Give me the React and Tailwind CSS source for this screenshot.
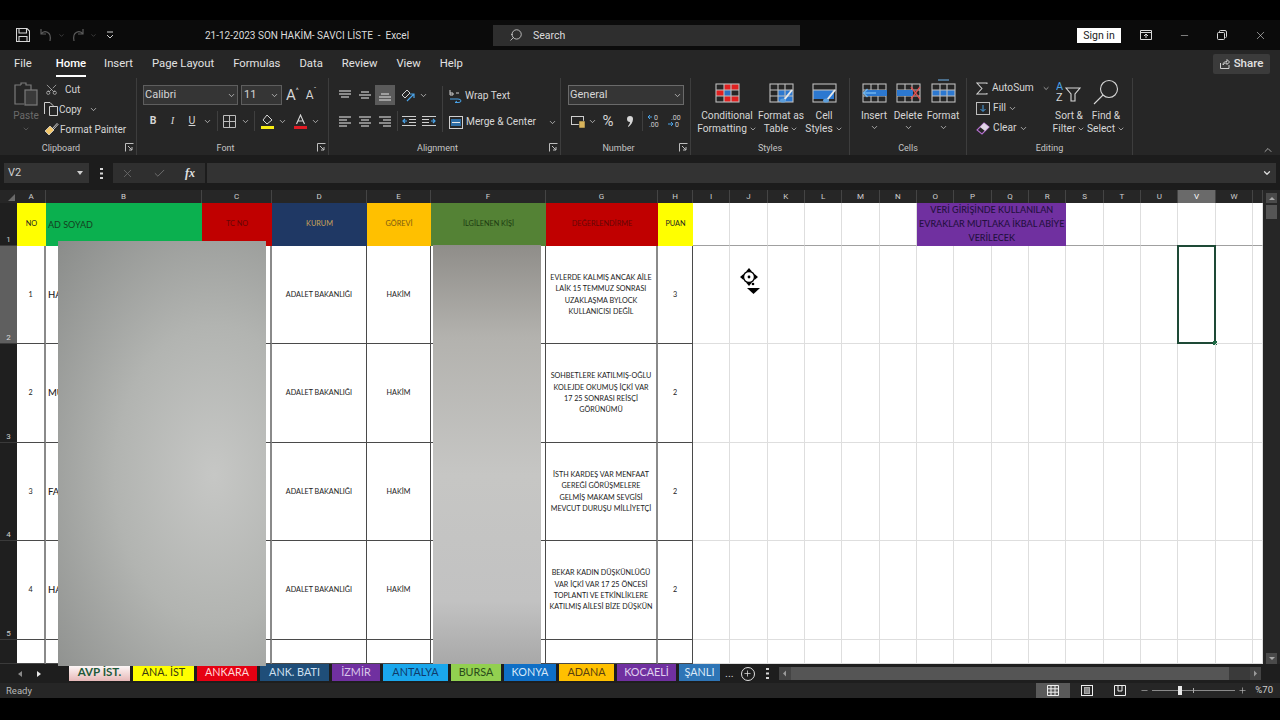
import { ChevronDown, ChevronUp, Check, X, Search, Scissors, Plus, Minus } from "lucide-react";

const ui = "font-['Roboto',sans-serif]";
const cellFont = "font-['Lato',sans-serif]";

const Chev = ({ className = "" }) => (
  <ChevronDown size={9} strokeWidth={2} className={"text-[#cfcfcf] " + className} />
);

const Slot = ({ w, children, className = "" }) => (
  <div className={"flex items-center justify-center shrink-0 h-5 " + w + " " + className}>{children}</div>
);

const Sep = ({ className = "" }) => <div className={"w-px h-5 bg-[#3f3f3f] shrink-0 " + className} />;

// little corner arrow of a ribbon group
const Launcher = () => (
  <svg width="9" height="9" viewBox="0 0 9 9" className="absolute right-[2px] bottom-[3px]" fill="none" stroke="#bdbdbd">
    <path d="M0.5 8.5V0.5H8.5M3 3L7 7M7 4V7H4" />
  </svg>
);

const Group = ({ w, label, launcher, children }) => (
  <div className={"relative flex flex-col shrink-0 h-[77px] border-r border-[#3d3d3d] " + w}>
    <div className="flex-1 flex min-h-0">{children}</div>
    <div className={"h-[13px] text-center text-[9px] leading-[13px] text-[#c4c4c4] " + (launcher ? "pr-[14px]" : "")}>{label}</div>
    {launcher && <Launcher />}
  </div>
);

// lines for the alignment buttons
const Lines = ({ rows }) => (
  <svg width="14" height="12" viewBox="0 0 14 12" stroke="#cfcfcf" strokeWidth="1.2">
    {rows.map(([x1, x2, y], i) => (
      <path key={i} d={`M${x1} ${y}H${x2}`} />
    ))}
  </svg>
);

const Indent = ({ flip }) => (
  <svg width="14" height="12" viewBox="0 0 14 12" fill="none" className={flip ? "-scale-x-100" : ""}>
    <path d="M0 1.5H14M7 4.5H14M7 7.5H14M0 10.5H14" stroke="#cfcfcf" strokeWidth="1.1" />
    <path d="M5 6H1M3 4L1 6L3 8" stroke="#4aa3e8" strokeWidth="1.2" />
  </svg>
);

const SheetIcon = ({ children, w = 25, h = 20 }) => (
  <svg width={w} height={h} viewBox="0 0 25 20" fill="none">{children}</svg>
);

const GridLines = (
  <g stroke="#bdbdbd" strokeWidth="1.1">
    <rect x="1" y="1" width="23" height="18" />
    <path d="M1 7H24M1 13H24M9 1V19M16 1V19" />
  </g>
);

const Brush = (
  <g>
    <path d="M15 17L23 7" stroke="#e8e8e8" strokeWidth="2" />
    <ellipse cx="14" cy="17.5" rx="3" ry="2" fill="#5d9fdc" />
  </g>
);

const BigBtn = ({ w, icon, lines, chevLast, className = "" }) => (
  <div className={"flex flex-col items-center shrink-0 pt-[5px] " + w + " " + className}>
    <div className="h-[26px]">{icon}</div>
    {lines.map((l, i) => (
      <div key={i} className="h-[13px] flex items-center gap-[2px] text-[10.2px] leading-[13px] text-[#d6d6d6] whitespace-nowrap">
        {l}
        {chevLast && i === lines.length - 1 && <ChevronDown size={8} strokeWidth={2} />}
      </div>
    ))}
    {!chevLast && <Chev className="mt-[1px]" />}
  </div>
);

const RibbonTabs = ["Insert", "Page Layout", "Formulas", "Data", "Review", "View", "Help"];

function TitleBar() {
  return (
    <div className="h-[30px] flex items-center bg-[#0b0b0b] text-[#dcdcdc]">
      <div className="w-[205px] shrink-0 flex items-center pl-[16px] gap-[4px]">
        <svg width="14" height="14" viewBox="0 0 14 14" fill="none" stroke="#d6d6d6" strokeWidth="1.1">
          <path d="M0.5 0.5H11L13.5 3V13.5H0.5Z M3 0.5V5H10.5V0.5 M3 13.5V8.5H11V13.5" />
        </svg>
        <svg width="16" height="14" viewBox="0 0 16 14" fill="none" stroke="#5c5c5c" strokeWidth="1.2" className="ml-[4px]">
          <path d="M3 1V6H8 M3 6C6 2 14 3 12 13" />
        </svg>
        <ChevronDown size={7} className="text-[#5c5c5c]" />
        <svg width="16" height="14" viewBox="0 0 16 14" fill="none" stroke="#5c5c5c" strokeWidth="1.2" className="ml-[1px]">
          <path d="M13 1V6H8 M13 6C10 2 2 3 4 13" />
        </svg>
        <ChevronDown size={7} className="text-[#5c5c5c]" />
        <svg width="8" height="8" viewBox="0 0 8 8" fill="none" stroke="#cfcfcf" className="ml-[5px]">
          <path d="M1 1H7M1 4L4 7L7 4" />
        </svg>
      </div>
      <div className="w-[288px] shrink-0 text-[10px] whitespace-pre">21-12-2023 SON HAKİM- SAVCI LİSTE  -  Excel</div>
      <div className="w-[307px] h-[21px] bg-[#2e2e2e] flex items-center pl-[16px] shrink-0">
        <Search size={14} strokeWidth={1.3} className="-scale-x-100 text-[#e0e0e0]" />
        <span className="ml-[10px] mt-[1px] text-[10.5px]">Search</span>
      </div>
      <div className="flex-1" />
      <div className="w-[44px] h-[15px] bg-white text-[#222] text-[10.5px] leading-[15px] text-center shrink-0">Sign in</div>
      <div className="ml-[6px] mr-[1px] flex">
        <Slot w="w-[38px]">
          <svg width="12" height="10" viewBox="0 0 12 10" fill="none" stroke="#d8d8d8">
            <path d="M0.5 0.5H11.5V9.5H0.5Z M0.5 2.5H11.5 M6 8V4M4 6L6 4L8 6" />
          </svg>
        </Slot>
        <Slot w="w-[38px]"><Minus size={11} strokeWidth={1.2} /></Slot>
        <Slot w="w-[38px]">
          <svg width="10" height="10" viewBox="0 0 10 10" fill="none" stroke="#d8d8d8">
            <path d="M2.5 2V1.5Q2.5 0.5 3.5 0.5H8Q9.5 0.5 9.5 2V6.5Q9.5 7.5 8.5 7.5" />
            <rect x="0.5" y="2.5" width="7" height="7" rx="1" />
          </svg>
        </Slot>
        <Slot w="w-[38px]"><X size={13} strokeWidth={1.1} /></Slot>
      </div>
    </div>
  );
}

function Ribbon() {
  return (
    <div className="h-[105px] bg-[#262626] text-[#d6d6d6]">
      <div className="h-[28px] flex items-center text-[11.3px] text-[#e2e2e2]">
        <span className="ml-[14px]">File</span>
        <span className="relative ml-[24px] font-medium text-white">
          Home
          <span className="absolute left-0 right-0 -bottom-[5px] h-[2px] bg-white" />
        </span>
        <div className="ml-[18px] flex gap-[19px]">
          {RibbonTabs.map((t) => (
            <span key={t}>{t}</span>
          ))}
        </div>
        <div className="flex-1" />
        <div className="mr-[10px] w-[57px] h-[20px] rounded-[2px] bg-[#3b3b3b] flex items-center justify-center gap-[4px] font-medium text-[11.5px]">
          <svg width="10" height="10" viewBox="0 0 10 10" fill="none" stroke="#cfcfcf">
            <path d="M0.5 4V9.5H9V6 M3 6C3 3 5 2.5 7 2.5V0.5L9.5 3L7 5.5V4C5 4 4 4.5 3 6" />
          </svg>
          Share
        </div>
      </div>

      <div className="flex">
        <Group w="w-[137px]" label="Clipboard" launcher>
          <div className="ml-[13px] w-[26px] pt-[4px] flex flex-col items-center text-[#6b6b6b]">
            <svg width="25" height="26" viewBox="0 0 25 26" fill="none" stroke="#7a7a7a" strokeWidth="1.2">
              <path d="M7 3H1V22H10 M7 3V1H12V3H17V8" />
              <rect x="11" y="8" width="12" height="15" fill="#3a3a3a" />
            </svg>
            <span className="mt-[1px] text-[10px] leading-[14px]">Paste</span>
            <ChevronDown size={8} strokeWidth={2} className="text-[#6b6b6b] mt-[2px]" />
          </div>
          <div className="ml-[5px] mt-[1px] text-[10px]">
            <div className="h-5 flex items-center gap-[4px]">
              <Scissors size={13} strokeWidth={1.2} className="text-[#cfcfcf] -rotate-90 ml-[1px]" />
              <span className="ml-[3px]">Cut</span>
            </div>
            <div className="h-5 flex items-center">
              <svg width="14" height="14" viewBox="0 0 14 14" fill="none" stroke="#cfcfcf">
                <path d="M0.5 12V0.5H6L9 3.5V5 M5.5 4.5H13.5V13.5H5.5Z" />
              </svg>
              <span className="ml-[1px]">Copy</span>
              <Chev className="ml-[7px]" />
            </div>
            <div className="h-5 flex items-center">
              <svg width="15" height="14" viewBox="0 0 15 14" fill="none">
                <path d="M8 7L13 1.5L14 2.5L9 8" stroke="#cfcfcf" />
                <path d="M1 9L6 4L10 8L5 13Z" fill="#f2c76b" stroke="#e8e8e8" strokeWidth="0.7" />
              </svg>
              <span className="ml-[1px] whitespace-nowrap">Format Painter</span>
            </div>
          </div>
        </Group>

        <Group w="w-[192px]" label="Font" launcher>
          <div className="pl-[6px] pt-[7px]">
            <div className="flex items-center h-5">
              <div className="w-[95px] h-5 pt-[1px] border border-[#5e5e5e] bg-[#353535] flex items-center justify-between px-[1px] text-[11px]">
                Calibri <Chev />
              </div>
              <div className="ml-[3px] w-[41px] h-5 pt-[1px] border border-[#5e5e5e] bg-[#353535] flex items-center justify-between px-[2px] text-[11px]">
                11 <Chev />
              </div>
              <span className="ml-[4px] text-[15px] leading-none">A</span>
              <span className="text-[7px] -mt-[8px]">^</span>
              <span className="ml-[7px] text-[12px] leading-none">A</span>
              <span className="text-[7px] -mt-[8px]">ˇ</span>
            </div>
            <div className="flex items-center mt-[6px]">
              <Slot w="w-5"><span className="text-[10.5px] font-bold">B</span></Slot>
              <Slot w="w-[19px]"><span className="text-[10.5px] italic font-['Liberation_Serif',serif]">I</span></Slot>
              <Slot w="w-5"><span className="text-[10.5px] underline">U</span></Slot>
              <Slot w="w-[10px]"><Chev /></Slot>
              <Sep className="ml-[5px]" />
              <Slot w="w-[22px]">
                <svg width="13" height="13" viewBox="0 0 13 13" fill="none" stroke="#bdbdbd">
                  <path d="M0.5 0.5H12.5V12.5H0.5Z M6.5 0.5V12.5 M0.5 6.5H12.5" />
                </svg>
              </Slot>
              <Slot w="w-[10px]"><Chev /></Slot>
              <Sep className="ml-[4px]" />
              <Slot w="w-[18px]" className="ml-[3px]">
                <svg width="15" height="15" viewBox="0 0 15 15" fill="none">
                  <path d="M7 1L12 6L7 10L3 6Z" stroke="#d6d6d6" />
                  <path d="M1 12H14V15H1Z" fill="#f7ec13" />
                </svg>
              </Slot>
              <Slot w="w-[12px]"><Chev /></Slot>
              <Slot w="w-[18px]" className="ml-[3px]">
                <svg width="15" height="15" viewBox="0 0 15 15" fill="none">
                  <path d="M3.5 10L7.5 1L11.5 10M5 7H10" stroke="#d6d6d6" strokeWidth="1.1" />
                  <path d="M1 12H14V15H1Z" fill="#e01b24" />
                </svg>
              </Slot>
              <Slot w="w-[10px]" className="ml-[1px]"><Chev /></Slot>
            </div>
          </div>
        </Group>

        <Group w="w-[232px]" label="Alignment" launcher>
          <div className="w-[113px] pl-[6px] pt-[7px] shrink-0">
            <div className="flex items-center">
              <Slot w="w-5"><Lines rows={[[1, 13, 2], [1, 13, 5], [3, 11, 8]]} /></Slot>
              <Slot w="w-5"><Lines rows={[[3, 11, 3], [1, 13, 6], [3, 11, 9]]} /></Slot>
              <Slot w="w-5" className="bg-[#5a5a5a]"><Lines rows={[[3, 11, 5], [1, 13, 8], [1, 13, 11]]} /></Slot>
              <Slot w="w-5" className="ml-[3px]">
                <svg width="14" height="14" viewBox="0 0 14 14" fill="none">
                  <path d="M1 7L6 2L9 5L4 10Z" stroke="#cfcfcf" />
                  <path d="M6 13L13 6M13 10V6H9" stroke="#4aa3e8" strokeWidth="1.2" />
                </svg>
              </Slot>
              <Slot w="w-[10px]"><Chev /></Slot>
            </div>
            <div className="flex items-center mt-[6px]">
              <Slot w="w-5"><Lines rows={[[1, 13, 2], [1, 9, 5], [1, 13, 8], [1, 9, 11]]} /></Slot>
              <Slot w="w-5"><Lines rows={[[1, 13, 2], [3, 11, 5], [1, 13, 8], [3, 11, 11]]} /></Slot>
              <Slot w="w-5"><Lines rows={[[1, 13, 2], [5, 13, 5], [1, 13, 8], [5, 13, 11]]} /></Slot>
              <Sep className="ml-[2px]" />
              <Slot w="w-5" className="ml-[1px]"><Indent /></Slot>
              <Slot w="w-5"><Indent flip /></Slot>
            </div>
          </div>
          <div className="mt-[8px] h-[46px] border-l border-[#3f3f3f] pl-[6px] text-[10.2px]">
            <div className="h-5 flex items-center gap-[3px]">
              <svg width="13" height="14" viewBox="0 0 13 14" fill="none">
                <path d="M1 10H9Q12 10 12 12Q12 13.5 9 13.5H6M8 12L6 13.5L8 14" stroke="#4aa3e8" />
                <path d="M1 1V6M1 4H4V6H1M7 4H10" stroke="#cfcfcf" />
              </svg>
              Wrap Text
            </div>
            <div className="h-5 mt-[6px] flex items-center gap-[3px] whitespace-nowrap">
              <svg width="14" height="13" viewBox="0 0 14 13" fill="none">
                <rect x="0.5" y="0.5" width="13" height="12" stroke="#cfcfcf" />
                <rect x="2" y="3" width="10" height="7" fill="#2f6ea5" />
                <path d="M3 6.5H11" stroke="#e8e8e8" />
              </svg>
              Merge & Center
              <Chev className="ml-[9px]" />
            </div>
          </div>
        </Group>

        <Group w="w-[130px]" label="Number" launcher>
          <div className="pl-[7px] pt-[7px]">
            <div className="w-[116px] h-5 pt-[1px] border border-[#6a6a6a] bg-[#353535] flex items-center justify-between px-[1px] text-[11px]">
              General <Chev />
            </div>
            <div className="flex items-center mt-[6px]">
              <Slot w="w-[16px]" className="ml-[2px]">
                <svg width="15" height="13" viewBox="0 0 15 13" fill="none">
                  <rect x="0.5" y="1.5" width="12" height="8" stroke="#cfcfcf" />
                  <rect x="8" y="6" width="6" height="7" fill="#d9b45b" stroke="#262626" strokeWidth="0.5" />
                </svg>
              </Slot>
              <Slot w="w-[12px]"><Chev /></Slot>
              <Slot w="w-[18px]" className="ml-[1px]"><span className="text-[15px]">%</span></Slot>
              <Slot w="w-[19px]" className="ml-[3px]">
                <svg width="6" height="11" viewBox="0 0 6 11" fill="#d6d6d6">
                  <path d="M3 0A3 3 0 0 1 6 3C6 6 4 9 1.5 11L1 10C2.5 8.5 3 7 3 6A3 3 0 0 1 3 0Z" />
                </svg>
              </Slot>
              <Sep className="ml-[3px]" />
              <Slot w="w-[18px]" className="ml-[2px]">
                <svg width="15" height="14" viewBox="0 0 15 14" fill="none">
                  <path d="M5 3H1M3 1L1 3L3 5" stroke="#4aa3e8" />
                  <text x="7" y="6" fill="#cfcfcf" fontSize="7">0</text>
                  <text x="2" y="13" fill="#cfcfcf" fontSize="7">.00</text>
                </svg>
              </Slot>
              <Slot w="w-[18px]" className="ml-[2px]">
                <svg width="15" height="14" viewBox="0 0 15 14" fill="none">
                  <path d="M1 10H6M4 8L6 10L4 12" stroke="#4aa3e8" />
                  <text x="4" y="6" fill="#cfcfcf" fontSize="7">.00</text>
                  <text x="8" y="13" fill="#cfcfcf" fontSize="7">0</text>
                </svg>
              </Slot>
            </div>
          </div>
        </Group>

        <Group w="w-[159px]" label="Styles">
          <BigBtn
            w="w-[56px]"
            className="ml-[8px]"
            chevLast
            lines={["Conditional", "Formatting"]}
            icon={
              <SheetIcon>
                <path d="M9 1H24V7H16V13H24V19H9V13H1V7H9Z" fill="#e02020" />
                <path d="M9 7H16V13H9Z" fill="#2c6fc0" />
                {GridLines}
              </SheetIcon>
            }
          />
          <BigBtn
            w="w-[52px]"
            chevLast
            lines={["Format as", "Table"]}
            icon={
              <SheetIcon>
                <path d="M9 7H24V19H9Z" fill="#2c78d0" />
                {GridLines}
                {Brush}
              </SheetIcon>
            }
          />
          <BigBtn
            w="w-[34px]"
            chevLast
            lines={["Cell", "Styles"]}
            icon={
              <SheetIcon>
                <path d="M1 7H22V16H1Z" fill="#2c78d0" />
                <g stroke="#bdbdbd" strokeWidth="1.1">
                  <rect x="1" y="1" width="23" height="18" />
                  <path d="M1 7H24" />
                </g>
                {Brush}
              </SheetIcon>
            }
          />
        </Group>

        <Group w="w-[117px]" label="Cells">
          <BigBtn
            w="w-[32px]"
            className="ml-[8px]"
            lines={["Insert"]}
            icon={
              <SheetIcon>
                {GridLines}
                <path d="M4 7H25V13H4Z" fill="#2c78d0" />
                <path d="M14 10H2M5.5 6L1.5 10L5.5 14" stroke="#6fb4ee" strokeWidth="1.4" />
              </SheetIcon>
            }
          />
          <BigBtn
            w="w-[32px]"
            className="ml-[2px]"
            lines={["Delete"]}
            icon={
              <SheetIcon>
                {GridLines}
                <path d="M1 7H17V13H1Z" fill="#2c78d0" />
                <path d="M15 4L24 16M24 4L15 16" stroke="#e05252" strokeWidth="1.3" />
              </SheetIcon>
            }
          />
          <BigBtn
            w="w-[32px]"
            className="ml-[3px]"
            lines={["Format"]}
            icon={
              <svg width="25" height="24" viewBox="0 0 25 24" fill="none" className="-mt-[4px]">
                <path d="M7 1H18" stroke="#6fb4ee" />
                <g transform="translate(0 4)">
                  <path d="M1 7H24V13H1Z" fill="#2c78d0" />
                  {GridLines}
                </g>
              </svg>
            }
          />
        </Group>

        <Group w="w-[166px]" label="Editing">
          <div className="ml-[9px] w-[74px] shrink-0 text-[10.2px]">
            <div className="h-5 flex items-center">
              <svg width="13" height="13" viewBox="0 0 13 13" fill="none" stroke="#d6d6d6" strokeWidth="1.1">
                <path d="M12 1.5V0.5H1L6.5 6.5L1 12.5H12V11.5" />
              </svg>
              <span className="ml-[4px]">AutoSum</span>
              <Chev className="ml-[8px]" />
            </div>
            <div className="h-5 flex items-center">
              <svg width="14" height="13" viewBox="0 0 14 13" fill="none">
                <rect x="0.5" y="0.5" width="13" height="12" stroke="#bdbdbd" />
                <path d="M7 3V9M4.5 7L7 9.5L9.5 7" stroke="#4aa3e8" />
              </svg>
              <span className="ml-[3px]">Fill</span>
              <Chev className="ml-[2px]" />
            </div>
            <div className="h-5 flex items-center">
              <svg width="14" height="13" viewBox="0 0 14 13" fill="none">
                <path d="M8 1L13 5L6 12L1 8Z" stroke="#b56fd0" strokeWidth="1.1" />
                <path d="M8 1L13 5L9 9L4 5Z" fill="#e0d6e6" />
              </svg>
              <span className="ml-[3px]">Clear</span>
              <Chev className="ml-[2px]" />
            </div>
          </div>
          <BigBtn
            w="w-[38px]"
            chevLast
            lines={["Sort &", "Filter"]}
            icon={
              <svg width="26" height="26" viewBox="0 0 26 26" fill="none" className="-mt-[4px]">
                <text x="0" y="11" fill="#4aa3e8" fontSize="11">A</text>
                <text x="0" y="22" fill="#d6d6d6" fontSize="11">Z</text>
                <path d="M10 9H24L19 15V22H15V15Z" stroke="#d6d6d6" strokeWidth="1.1" />
              </svg>
            }
          />
          <BigBtn
            w="w-[36px]"
            chevLast
            lines={["Find &", "Select"]}
            icon={
              <svg width="26" height="26" viewBox="0 0 26 26" fill="none" stroke="#d6d6d6" strokeWidth="1.1" className="-mt-[4px]">
                <circle cx="16" cy="10" r="8.5" />
                <path d="M10 16L1 25" />
              </svg>
            }
          />
        </Group>
        <div className="flex-1 relative">
          <ChevronUp size={12} strokeWidth={1.5} className="absolute right-[6px] top-[66px] text-[#cfcfcf]" />
        </div>
      </div>
    </div>
  );
}

function FormulaBar() {
  return (
    <div className="h-[35px] bg-[#1c1c1c] pt-[8px] flex items-start text-[#cfcfcf]">
      <div className="ml-[4px] w-[85px] h-5 bg-[#333] flex items-center justify-between pl-[4px] pr-[6px] text-[11px]">
        V2
        <svg width="6" height="4" viewBox="0 0 6 4"><path d="M0 0H6L3 4Z" fill="#cfcfcf" /></svg>
      </div>
      <div className="w-[24px] h-5 flex items-center justify-center">
        <svg width="3" height="11" viewBox="0 0 3 11" fill="#d6d6d6">
          <rect x="0" y="0" width="3" height="2" />
          <rect x="0" y="4.5" width="3" height="2" />
          <rect x="0" y="9" width="3" height="2" />
        </svg>
      </div>
      <div className="w-[92px] h-5 bg-[#2f2f2f] flex items-center justify-between pl-[8px] pr-[10px]">
        <X size={13} strokeWidth={1.5} className="text-[#6e6e6e]" />
        <Check size={13} strokeWidth={1.8} className="text-[#6e6e6e]" />
        <span className="font-['Liberation_Serif',serif] italic font-bold text-[12px] text-[#e0e0e0]">fx</span>
      </div>
      <div className="ml-[2px] flex-1 mr-[4px] h-5 bg-[#333] flex items-center justify-end pr-[4px]">
        <ChevronDown size={10} strokeWidth={3} className="text-[#dcdcdc]" />
      </div>
    </div>
  );
}

const COLS = ["A", "B", "C", "D", "E", "F", "G", "H", "I", "J", "K", "L", "M", "N", "O", "P", "Q", "R", "S", "T", "U", "V", "W", ""];

const HEADERS = {
  A: ["NO", "bg-[#ffff00] text-[#222] justify-center"],
  B: ["AD SOYAD", "bg-[#0bb04f] text-[#14401f] text-[9px] pl-[2px]"],
  C: ["TC NO", "bg-[#c00000] text-[#650606] justify-center"],
  D: ["KURUM", "bg-[#1f3864] text-[#c9a45a] justify-center"],
  E: ["GÖREVİ", "bg-[#ffc000] text-[#7a5a12] justify-center"],
  F: ["İLGİLENEN KİŞİ", "bg-[#548235] text-[#1c3a10] justify-center"],
  G: ["DEĞERLENDİRME", "bg-[#c00000] text-[#650606] justify-center"],
  H: ["PUAN", "bg-[#ffff00] text-[#222] justify-center"],
};

const ROWS = [
  {
    no: 1, name: "HA", puan: 3,
    note: ["EVLERDE KALMIŞ ANCAK AİLE", "LAİK 15 TEMMUZ SONRASI", "UZAKLAŞMA BYLOCK", "KULLANICISI DEĞİL"],
  },
  {
    no: 2, name: "MU", puan: 2,
    note: ["SOHBETLERE KATILMIŞ-OĞLU", "KOLEJDE OKUMUŞ İÇKİ VAR", "17 25 SONRASI REİSÇİ", "GÖRÜNÜMÜ"],
  },
  {
    no: 3, name: "FA", puan: 2,
    note: ["İSTH KARDEŞ VAR MENFAAT", "GEREĞİ GÖRÜŞMELERE", "GELMİŞ MAKAM SEVGİSİ", "MEVCUT DURUŞU MİLLİYETÇİ"],
  },
  {
    no: 4, name: "HA", puan: 2,
    note: ["BEKAR KADIN DÜŞKÜNLÜĞÜ", "VAR İÇKİ VAR 17 25 ÖNCESİ", "TOPLANTI VE ETKİNLİKLERE", "KATILMIŞ AİLESİ BİZE DÜŞKÜN"],
  },
];

const EMPTY = COLS.slice(8);
const tableCell = "flex items-center justify-center text-center border-r border-b border-[#4a4a4a] text-[7.2px] leading-[11.3px] text-[#1a1a1a]";

const RowHead = ({ n, active }) => (
  <div className={"flex items-end justify-center text-[8px] leading-[10px] border-b border-[#3a3a3a] " + ui + " " + (active ? "bg-[#5f5f5f] text-[#dcdcdc]" : "bg-[#1f1f1f] text-[#cfcfcf]")}>
    {n}
  </div>
);

const Empty = ({ dark, children }) => (
  <div className={"relative border-r border-[#dedede] border-b " + (dark ? "border-b-[#a0a0a0]" : "border-b-[#dedede]")}>{children}</div>
);

function Sheet() {
  return (
    <div className={"relative w-[1263px] h-[474px] bg-white grid grid-cols-[17px_29px_156px_70px_95px_64px_115px_112px_35px_repeat(15,37.35px)_10px] grid-rows-[13px_43px_98px_99px_98px_99px_24px] " + cellFont}>
      {/* column letters */}
      <div className="bg-[#262626] flex items-end justify-end pr-[2px] pb-[2px]">
        <div className="w-0 h-0 border-l-[7px] border-l-transparent border-b-[7px] border-b-[#6a6a6a]" />
      </div>
      {COLS.map((c, i) => (
        <div key={i} className={"flex items-center justify-center text-[8px] border-r border-[#444] " + ui + " " + (c === "V" ? "bg-[#6a6a6a] text-white" : "bg-[#262626] text-[#cfcfcf]")}>
          {c}
        </div>
      ))}

      {/* heading row */}
      <RowHead n={1} />
      {Object.entries(HEADERS).map(([k, [t, cls]]) => (
        <div key={k} className={"flex items-center text-[7.3px] whitespace-nowrap " + cls}>{t}</div>
      ))}
      {EMPTY.slice(0, 6).map((c, i) => <Empty key={i} dark />)}
      <div className="col-span-4 bg-[#7030a0] text-[#24103f] text-[9px] leading-[14px] text-center font-medium whitespace-nowrap">
        VERİ GİRİŞİNDE KULLANILAN
        <br />
        EVRAKLAR MUTLAKA İKBAL ABİYE
        <br />
        VERİLECEK
      </div>
      {EMPTY.slice(10).map((c, i) => <Empty key={i} dark />)}

      {/* data rows */}
      {ROWS.map((r, ri) => (
        <div key={r.no} className="contents">
          <RowHead n={r.no + 1} active={ri === 0} />
          <div className={tableCell + " border-r-2 border-r-[#8a8a8a]"}>{r.no}</div>
          <div className={tableCell + " !justify-start pl-[2px] !text-[9.5px] font-medium"}>{r.name}</div>
          <div className={tableCell + " border-r-2 border-r-[#8a8a8a]"} />
          <div className={tableCell}>ADALET BAKANLIĞI</div>
          <div className={tableCell}>HAKİM</div>
          <div className={tableCell} />
          <div className={tableCell + " border-r-2 border-r-[#8a8a8a]"}>
            <div>
              {r.note.map((l) => (
                <div key={l} className="whitespace-nowrap">{l}</div>
              ))}
            </div>
          </div>
          <div className={tableCell}>{r.puan}</div>
          {EMPTY.map((c, i) => (
            <Empty key={i}>
              {ri === 0 && c === "V" && (
                <div className="absolute -inset-[1px] border-2 border-[#1e4a36]">
                  <div className="absolute -right-[3px] -bottom-[3px] w-[4px] h-[4px] bg-[#1e6b45]" />
                </div>
              )}
            </Empty>
          ))}
        </div>
      ))}

      {/* partial row at the bottom */}
      <RowHead n="" />
      <div className={tableCell + " border-r-2 border-r-[#8a8a8a]"} />
      <div className={tableCell} />
      <div className={tableCell + " border-r-2 border-r-[#8a8a8a]"} />
      <div className={tableCell} />
      <div className={tableCell} />
      <div className={tableCell} />
      <div className={tableCell + " border-r-2 border-r-[#8a8a8a]"} />
      <div className={tableCell} />
      {EMPTY.map((c, i) => <Empty key={i} />)}

      {/* masked-out names lying over the table */}
      <div className="absolute left-[58px] top-[51px] w-[208px] h-[425px] z-10 bg-[radial-gradient(ellipse_at_75%_55%,#c6c7c5_0%,#b2b4b1_45%,#8a8c8a_100%)]" />
      <div className="absolute left-[433px] top-[55px] w-[108px] h-[419px] bg-[linear-gradient(to_bottom,#8f8d89_0%,#b3b2ae_22%,#c6c6c4_55%,#c2c2c2_85%,#a8a8a8_100%)]" />

      {/* mouse pointer */}
      <svg width="20" height="26" viewBox="0 0 20 26" className="absolute left-[740px] top-[78px]">
        <circle cx="9" cy="9" r="5.5" fill="white" stroke="black" strokeWidth="1.4" />
        <circle cx="9" cy="9" r="1.4" fill="black" />
        <path d="M9 0L12 3.5H6ZM9 18L6 14.5H12ZM0 9L3.5 6V12ZM18 9L14.5 12V6Z" fill="black" />
        <circle cx="13" cy="16" r="1.3" fill="black" />
        <path d="M7 20H20L13.5 26Z" fill="black" />
      </svg>
    </div>
  );
}

const SheetTabs = [
  ["AVP İST.", "w-[61px] text-[11.5px] bg-gradient-to-b from-white to-[#e6b8b8] text-[#1d5a3a] font-bold"],
  ["ANA. İST", "w-[61px] bg-[#ffff00] text-[#3a3a10]"],
  ["ANKARA", "w-[60px] bg-[#e60012] text-[#ffd7d7]"],
  ["ANK. BATI", "w-[69px] bg-[#1f4e79] text-[#cfe0f0]"],
  ["İZMİR", "w-[48px] bg-[#7030a0] text-[#d9c6ea]"],
  ["ANTALYA", "w-[65px] bg-[#1aa7ec] text-[#0f3a6a]"],
  ["BURSA", "w-[50px] bg-[#92d050] text-[#2a4a1a]"],
  ["KONYA", "w-[52px] bg-[#0f6fc6] text-[#d6e8f8]"],
  ["ADANA", "w-[55px] bg-[#ffc000] text-[#5a4010]"],
  ["KOCAELİ", "w-[59px] bg-[#7030a0] text-[#e0d0ee]"],
  ["ŞANLI", "w-[41px] bg-[#2e75b6] text-[#dceaf8]"],
];

function TabStrip() {
  return (
    <div className="h-[19px] bg-[#1e1e1e] flex items-center">
      <svg width="60" height="10" viewBox="0 0 60 10" className="shrink-0 ml-[9px]">
        <path d="M13 2L9 5L13 8Z" fill="#8a8a8a" />
        <path d="M28 2L32 5L28 8Z" fill="#e8e8e8" />
      </svg>
      <div className={"flex gap-[3px] h-[17px] -mt-[2px] overflow-hidden text-[10.8px] leading-[15px] text-center " + cellFont}>
        {SheetTabs.map(([t, cls]) => (
          <div key={t} className={"shrink-0 whitespace-nowrap overflow-hidden " + cls}>{t}</div>
        ))}
      </div>
      <span className="ml-[5px] text-[#cfcfcf] text-[11px] leading-none">...</span>
      <div className="ml-[7px] w-[14px] h-[14px] rounded-full border border-[#e0e0e0] flex items-center justify-center shrink-0">
        <Plus size={9} strokeWidth={2} className="text-[#e0e0e0]" />
      </div>
      <svg width="3" height="11" viewBox="0 0 3 11" fill="#d6d6d6" className="ml-[11px] shrink-0">
        <rect x="0" y="0" width="3" height="2" />
        <rect x="0" y="4.5" width="3" height="2" />
        <rect x="0" y="9" width="3" height="2" />
      </svg>
      <div className="ml-[10px] w-[482px] h-[13px] bg-[#3a3a3a] flex items-center shrink-0">
        <div className="w-[12px] flex justify-center bg-[#444]">
          <svg width="5" height="13" viewBox="0 0 5 13"><path d="M4 3.5L1 6.5L4 9.5Z" fill="#9a9a9a" /></svg>
        </div>
        <div className="w-[438px] h-full bg-[#555]" />
        <div className="flex-1" />
        <div className="w-[11px] flex justify-center bg-[#444]">
          <svg width="5" height="13" viewBox="0 0 5 13"><path d="M1 3.5L4 6.5L1 9.5Z" fill="#9a9a9a" /></svg>
        </div>
      </div>
    </div>
  );
}

function StatusBar() {
  return (
    <div className="h-[15px] bg-[#262626] flex items-center text-[#b8b8b8] text-[9.5px]">
      <span className="ml-[6px] mt-[2px]">Ready</span>
      <div className="flex-1" />
      <div className="w-[34px] h-[15px] bg-[#5a5a5a] flex items-center justify-center">
        <svg width="12" height="11" viewBox="0 0 12 11" fill="none" stroke="#f0f0f0">
          <path d="M0.5 0.5H11.5V10.5H0.5Z M4 0.5V10.5 M8 0.5V10.5 M0.5 3.8H11.5 M0.5 7.2H11.5" />
        </svg>
      </div>
      <div className="w-[34px] flex justify-center">
        <svg width="12" height="11" viewBox="0 0 12 11" fill="none" stroke="#f0f0f0">
          <rect x="0.5" y="0.5" width="11" height="10" />
          <rect x="3.5" y="2.5" width="5" height="6" fill="#8a8a8a" stroke="#aaa" />
        </svg>
      </div>
      <div className="w-[32px] flex justify-center">
        <svg width="12" height="11" viewBox="0 0 12 11" fill="none" stroke="#f0f0f0">
          <path d="M0.5 0.5H11.5V10.5H0.5Z M4 0.5V6H8V0.5" />
        </svg>
      </div>
      <Minus size={9} strokeWidth={1.5} className="ml-[4px] text-[#cfcfcf]" />
      <div className="relative w-[83px] h-[1px] bg-[#8a8a8a] ml-[3px]">
        <div className="absolute left-[26px] -top-[4px] w-[4px] h-[9px] bg-[#e8e8e8]" />
        <div className="absolute left-[41px] -top-[2px] w-px h-[5px] bg-[#aaa]" />
      </div>
      <Plus size={9} strokeWidth={1.5} className="ml-[3px] text-[#cfcfcf]" />
      <span className="ml-[8px] mr-[7px] text-[#cfcfcf]">%70</span>
    </div>
  );
}

export default function App() {
  return (
    <div className={"w-[1280px] h-[720px] overflow-hidden bg-black flex flex-col " + ui}>
      <div className="h-[20px] shrink-0" />
      <TitleBar />
      <Ribbon />
      <FormulaBar />
      <div className="flex bg-[#262626]">
        <Sheet />
        <div className="w-[17px] flex flex-col items-center pt-[3px] bg-[#262626]">
          <div className="w-[11px] h-[10px] bg-[#4a4a4a] flex items-center justify-center">
            <div className="w-0 h-0 border-x-[3px] border-x-transparent border-b-[3px] border-b-[#a8a8a8]" />
          </div>
          <div className="w-[11px] h-[14px] mt-[2px] bg-[#555]" />
          <div className="flex-1" />
          <div className="w-[11px] h-[11px] bg-[#4a4a4a] flex items-center justify-center">
            <div className="w-0 h-0 border-x-[3px] border-x-transparent border-t-[3px] border-t-[#a8a8a8]" />
          </div>
        </div>
      </div>
      <TabStrip />
      <StatusBar />
    </div>
  );
}
